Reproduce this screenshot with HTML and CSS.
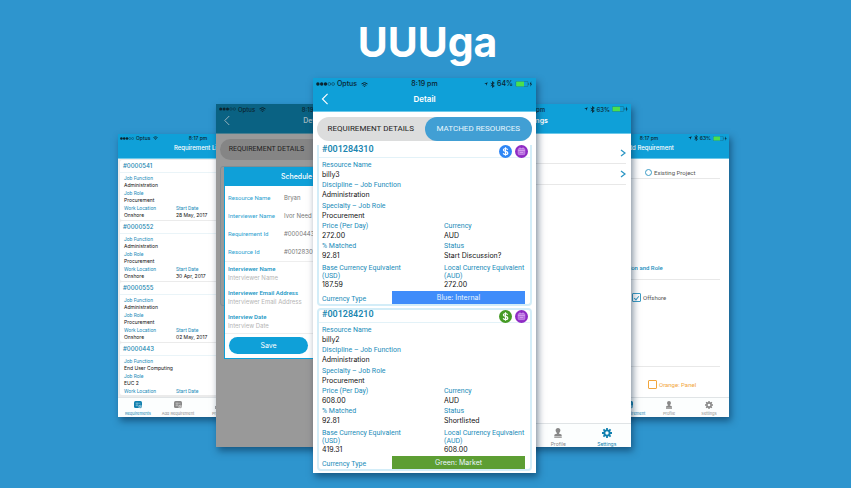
FILE: index.html
```html
<!DOCTYPE html>
<html lang="en">
<head>
<meta charset="utf-8">
<meta name="viewport" content="width=device-width, initial-scale=1">
<title>UUUga</title>
<link rel="stylesheet" href="styles.css">
</head>
<body>
<svg class="defs" aria-hidden="true">
  <symbol id="signal" viewBox="0 0 20 4"><g fill="currentColor"><circle cx="2" cy="2" r="1.8"/><circle cx="6" cy="2" r="1.8"/><circle cx="10" cy="2" r="1.8"/></g><g fill="none" stroke="currentColor" stroke-width=".5"><circle cx="14" cy="2" r="1.5"/><circle cx="18" cy="2" r="1.5"/></g></symbol>
  <symbol id="wifi" viewBox="0 0 14 10"><g fill="none" stroke="currentColor" stroke-width="2"><path d="M1 3.800Q7-1.400 13 3.800"/><path d="M3.300 6.600Q7 3.400 10.700 6.600"/></g><path d="M5 8.200Q7 6.600 9 8.200L7 10Z" fill="currentColor"/></symbol>
  <symbol id="arrow" viewBox="0 0 10 10"><path d="M9.500.5L5.500 9.500L5 5L.5 4.500Z" fill="currentColor"/></symbol>
  <symbol id="bluetooth" viewBox="0 0 8 12"><path d="M1 3.500L7 8.500L4 11V1L7 3.500L1 8.500" fill="none" stroke="currentColor" stroke-width="1.500"/></symbol>
  <symbol id="battery" viewBox="0 0 28 10"><rect x=".5" y=".5" width="20" height="9" rx="1.500" fill="none" stroke="#186b83"/><rect x="1" y="1" width="13" height="8" fill="#4be04c"/><path d="M21.500 3.500V6.500" stroke="#186b83" stroke-width="1.500"/><path d="M26 .5L23.500 5.500H25.200L24.500 9.500L27.500 4.500H25.800Z" fill="currentColor"/></symbol>
  <symbol id="back" viewBox="0 0 8 14"><path d="M7 1L1 7L7 13" fill="none" stroke="currentColor" stroke-width="1.300"/></symbol>
  <symbol id="next" viewBox="0 0 6 8"><path d="M1 1L5 4L1 7" fill="none" stroke="currentColor" stroke-width="1.300"/></symbol>
  <symbol id="list" viewBox="0 0 16 16"><rect width="16" height="14" rx="3" fill="currentColor"/><path d="M3 4.500H13M3 8.500H9M6 3V11" stroke="#fff" stroke-width=".9" opacity=".75"/><circle cx="12.500" cy="11.500" r="3" fill="currentColor" stroke="#fff"/><path d="M11 11.500H14M12.500 10V13" stroke="#fff" stroke-width=".8"/></symbol>
  <symbol id="profile" viewBox="0 0 16 20"><path d="M8 0C11 0 12.800 2 12.800 4.700C12.800 7 11.500 9 10.200 10V11.500L14 12.500Q15.500 13.200 15.500 16H.5Q.5 13.200 2 12.500L5.800 11.500V10C4.500 9 3.200 7 3.200 4.700C3.200 2 5 0 8 0ZM.5 17H15.500V19.500H.5Z" fill="currentColor"/></symbol>
  <symbol id="gear" viewBox="0 0 20 20"><circle cx="10" cy="10" r="5.300" fill="none" stroke="currentColor" stroke-width="3.800"/><path d="M10 0V4M10 16V20M0 10H4M16 10H20M2.900 2.900L5.700 5.700M14.300 14.300L17.100 17.100M2.900 17.100L5.700 14.300M14.300 5.700L17.100 2.900" stroke="currentColor" stroke-width="3.600"/></symbol>
  <symbol id="dollar" viewBox="0 0 13 13"><circle cx="6.500" cy="6.500" r="6.500" fill="currentColor"/><path d="M8.700 4.700C8.300 3.800 7.500 3.500 6.500 3.500C5.300 3.500 4.400 4 4.400 5C4.400 7 8.800 5.900 8.800 8C8.800 9 7.800 9.600 6.500 9.600C5.400 9.600 4.500 9.100 4.200 8.200M6.500 2.300V10.800" fill="none" stroke="#fff" stroke-width="1.200"/></symbol>
  <symbol id="calendar" viewBox="0 0 13 13"><circle cx="6.500" cy="6.500" r="6.500" fill="#8f2bc4"/><rect x="3.200" y="3.600" width="6.600" height="6" rx="1" fill="#b56ddd" stroke="#cb92e8" stroke-width=".8"/><path d="M3.200 5.500H9.800M5 2.400V4.300M8 2.400V4.300M4.800 7.500H8.200" stroke="#d9a5f0" stroke-width=".8"/></symbol>
</svg>

<h1 class="brand">UUUga</h1>

<main class="stage">
  <section class="phone phone-outer">
    <header class="bar">
      <div class="status"><span class="carrier"><svg class="i-signal"><use href="#signal"/></svg>Optus<svg class="i-wifi"><use href="#wifi"/></svg></span><span>8:17 pm</span></div>
      <h2 class="title">Requirement List</h2>
    </header>
    <div class="jobs">
      <article class="job">
        <h3>#0000541</h3>
        <dl><div class="wide"><dt>Job Function</dt><dd>Administration</dd></div><div class="wide"><dt>Job Role</dt><dd>Procurement</dd></div><div><dt>Work Location</dt><dd>Onshore</dd></div><div><dt>Start Date</dt><dd>28 May, 2017</dd></div></dl>
      </article>
      <article class="job">
        <h3>#0000552</h3>
        <dl><div class="wide"><dt>Job Function</dt><dd>Administration</dd></div><div class="wide"><dt>Job Role</dt><dd>Procurement</dd></div><div><dt>Work Location</dt><dd>Onshore</dd></div><div><dt>Start Date</dt><dd>30 Apr, 2017</dd></div></dl>
      </article>
      <article class="job">
        <h3>#0000555</h3>
        <dl><div class="wide"><dt>Job Function</dt><dd>Administration</dd></div><div class="wide"><dt>Job Role</dt><dd>Procurement</dd></div><div><dt>Work Location</dt><dd>Onshore</dd></div><div><dt>Start Date</dt><dd>02 May, 2017</dd></div></dl>
      </article>
      <article class="job">
        <h3>#0000443</h3>
        <dl><div class="wide"><dt>Job Function</dt><dd>End User Computing</dd></div><div class="wide"><dt>Job Role</dt><dd>EUC 2</dd></div><div><dt>Work Location</dt></div><div><dt>Start Date</dt></div></dl>
      </article>
    </div>
    <nav class="tabs">
      <a href="#requirements" class="active"><svg><use href="#list"/></svg>Requirements</a>
      <a href="#add"><svg><use href="#list"/></svg>Add Requirement</a>
      <a href="#profile"><svg><use href="#profile"/></svg>Profile</a>
    </nav>
  </section>

  <section class="phone phone-inner dimmed">
    <header class="bar">
      <div class="status"><span class="carrier"><svg class="i-signal"><use href="#signal"/></svg>Optus<svg class="i-wifi"><use href="#wifi"/></svg></span><span>8:19 pm</span></div>
      <div class="titlebar"><button class="back" aria-label="Back"><svg><use href="#back"/></svg></button><h2 class="title">Detail</h2></div>
    </header>
    <div class="switch"><button>REQUIREMENT DETAILS</button></div>
    <div class="ghost"></div>
    <form class="modal">
      <h3>Schedule Interview</h3>
      <dl class="facts">
        <dt>Resource Name</dt><dd>Bryan</dd>
        <dt>Interviewer Name</dt><dd>Ivor Need</dd>
        <dt>Requirement Id</dt><dd>#0000443</dd>
        <dt>Resource Id</dt><dd>#001283010</dd>
      </dl>
      <div class="inputs">
        <label for="iname">Interviewer Name</label><input id="iname" type="text" placeholder="Interviewer Name">
        <label for="imail">Interviewer Email Address</label><input id="imail" type="email" placeholder="Interviewer Email Address">
        <label for="idate">Interview Date</label><input id="idate" type="text" placeholder="Interview Date">
      </div>
      <div class="actions"><button type="button">Save</button></div>
    </form>
  </section>

  <section class="phone phone-main">
    <header class="bar">
      <div class="status"><span class="carrier"><svg class="i-signal"><use href="#signal"/></svg>Optus<svg class="i-wifi"><use href="#wifi"/></svg></span><span>8:19 pm</span><span class="power"><svg class="i-arrow"><use href="#arrow"/></svg><svg class="i-bt"><use href="#bluetooth"/></svg>64%<svg class="i-bat"><use href="#battery"/></svg></span></div>
      <div class="titlebar"><button class="back" aria-label="Back"><svg><use href="#back"/></svg></button><h2 class="title">Detail</h2></div>
    </header>
    <div class="switch"><button>REQUIREMENT DETAILS</button><button class="on">MATCHED RESOURCES</button></div>
    <div class="cards">
      <article class="card">
        <header><h3>#001284310</h3><svg class="blue"><use href="#dollar"/></svg><svg><use href="#calendar"/></svg></header>
        <dl>
          <div class="wide"><dt>Resource Name</dt><dd>billy3</dd></div>
          <div class="wide"><dt>Discipline – Job Function</dt><dd>Administration</dd></div>
          <div class="wide spaced"><dt>Specialty – Job Role</dt><dd>Procurement</dd></div>
          <div><dt>Price (Per Day)</dt><dd>272.00</dd></div><div><dt>Currency</dt><dd>AUD</dd></div>
          <div><dt>% Matched</dt><dd>92.81</dd></div><div><dt>Status</dt><dd>Start Discussion?</dd></div>
          <div class="tall"><dt>Base Currency Equivalent<br>(USD)</dt><dd>187.59</dd></div><div class="tall"><dt>Local Currency Equivalent<br>(AUD)</dt><dd>272.00</dd></div>
          <div class="type"><dt>Currency Type</dt><dd class="tag tag-blue">Blue: Internal</dd></div>
        </dl>
      </article>
      <article class="card">
        <header><h3>#001284210</h3><svg class="green"><use href="#dollar"/></svg><svg><use href="#calendar"/></svg></header>
        <dl>
          <div class="wide"><dt>Resource Name</dt><dd>billy2</dd></div>
          <div class="wide"><dt>Discipline – Job Function</dt><dd>Administration</dd></div>
          <div class="wide spaced"><dt>Specialty – Job Role</dt><dd>Procurement</dd></div>
          <div><dt>Price (Per Day)</dt><dd>608.00</dd></div><div><dt>Currency</dt><dd>AUD</dd></div>
          <div><dt>% Matched</dt><dd>92.81</dd></div><div><dt>Status</dt><dd>Shortlisted</dd></div>
          <div class="tall"><dt>Base Currency Equivalent<br>(USD)</dt><dd>419.31</dd></div><div class="tall"><dt>Local Currency Equivalent<br>(AUD)</dt><dd>608.00</dd></div>
          <div class="type"><dt>Currency Type</dt><dd class="tag tag-green">Green: Market</dd></div>
        </dl>
      </article>
    </div>
  </section>

  <section class="phone phone-inner right">
    <header class="bar">
      <div class="status"><span></span><span>8:17 pm</span><span class="power"><svg class="i-arrow"><use href="#arrow"/></svg><svg class="i-bt"><use href="#bluetooth"/></svg>63%<svg class="i-bat"><use href="#battery"/></svg></span></div>
      <h2 class="title">Settings</h2>
    </header>
    <div class="rows">
      <a href="#first" aria-label="Open first setting"><svg><use href="#next"/></svg></a>
      <a href="#second" aria-label="Open second setting"><svg><use href="#next"/></svg></a>
    </div>
    <nav class="tabs">
      <a href="#profile"><svg><use href="#profile"/></svg>Profile</a>
      <a href="#settings" class="active"><svg><use href="#gear"/></svg>Settings</a>
    </nav>
  </section>

  <section class="phone phone-outer right">
    <header class="bar">
      <div class="status"><span></span><span>8:17 pm</span><span class="power"><svg class="i-arrow"><use href="#arrow"/></svg><svg class="i-bt"><use href="#bluetooth"/></svg>63%<svg class="i-bat"><use href="#battery"/></svg></span></div>
      <h2 class="title">Add Requirement</h2>
    </header>
    <form class="add">
      <div class="project"><label><input type="radio" name="project">Existing Project</label></div>
      <fieldset><legend>Job Function and Role</legend></fieldset>
      <div class="shore"><label><input type="checkbox" checked>Offshore</label></div>
      <div class="panel"><label><input type="checkbox">Orange: Panel</label></div>
    </form>
    <nav class="tabs">
      <a href="#add" class="active"><svg><use href="#list"/></svg>Add Requirement</a>
      <a href="#profile"><svg><use href="#profile"/></svg>Profile</a>
      <a href="#settings"><svg><use href="#gear"/></svg>Settings</a>
    </nav>
  </section>
</main>
</body>
</html>
```
FILE: styles.css
```css
* { box-sizing: border-box; }
body { margin: 0; min-height: 100vh; background: #2e95ce; color: #111; font-family: Inter, "Liberation Sans", sans-serif; overflow: hidden; }
h1, h2, h3, dl, dd, fieldset, legend { margin: 0; padding: 0; border: 0; font-weight: 400; }
button, input { font: inherit; color: inherit; border: 0; margin: 0; padding: 0; background: none; }
a { color: inherit; text-decoration: none; }
svg { display: block; flex: none; }
.defs { position: absolute; width: 0; height: 0; }
dt, label, legend, .switch button, .card h3 { font-family: Roboto, "Liberation Sans", sans-serif; }

.brand { padding: 18px 0 12px 4px; color: #fff; font-size: 41px; line-height: 48px; font-weight: 700; text-align: center; }

.stage { display: flex; justify-content: center; align-items: center; padding-right: 4px; }
.phone { position: relative; flex: none; display: flex; flex-direction: column; aspect-ratio: 223 / 395; overflow: hidden; background: #fff; box-shadow: 2px 4px 7px rgba(0, 30, 60, .5); white-space: nowrap; }
.phone-main { z-index: 3; width: 223px; margin: 0 -99px 0 -97px; font-size: 7px; }
.phone-inner { z-index: 2; width: 194px; font-size: 6px; }
.phone-outer { width: 160px; font-size: 5px; }
.phone-outer:first-child { margin-right: -62px; }
.phone-outer:last-child { margin-left: -62px; }

.bar { flex: none; background: #0fa0d8; color: #fff; border-bottom: 1px solid #6cc9ea; }
.status { display: grid; grid-template-columns: 1fr auto 1fr; align-items: center; color: #0b2430; padding: 0 3px; line-height: 12px; font-weight: 500; }
.carrier, .power { display: flex; align-items: center; gap: 2px; }
.power { justify-content: flex-end; }
.i-signal { width: 19px; height: 4px; }
.i-wifi { width: 7px; height: 5px; margin-left: 2px; }
.i-arrow { width: 4px; height: 4px; }
.i-bt { width: 5px; height: 7px; }
.i-bat { width: 18px; height: 6px; }
.title { text-align: center; font-weight: 600; }
.titlebar { display: grid; grid-template-columns: 1fr auto 1fr; align-items: center; padding: 0 8px; }
.back { justify-self: start; }
.back svg { width: 8px; height: 12px; }
.phone-main .title { font-size: 8px; line-height: 18px; }
.phone-main .bar { padding-bottom: 3px; }
.phone-inner .title { font-size: 7px; line-height: 12px; }
.phone-inner .bar { padding-bottom: 6px; }
.phone-inner .status { line-height: 11px; }
.phone-outer .title { font-size: 6px; line-height: 10px; font-weight: 500; }
.phone-outer .bar { padding-bottom: 5px; }
.phone-outer .status { line-height: 9px; padding: 0 2px; }
.phone-outer .i-signal { width: 14px; height: 3px; }
.phone-outer .i-wifi { width: 5px; height: 4px; margin-left: 1px; }
.phone-inner .i-signal { width: 17px; }
.phone-inner .i-bat { width: 16px; }
.phone-outer .i-bat { width: 14px; height: 5px; }
.phone-outer .i-bt { width: 4px; height: 6px; }

.switch { flex: none; display: flex; margin: 5px 4px 4px; border-radius: 12px; background: #dcdddd; font-size: 8px; line-height: 24px; }
.switch button { flex: 1; color: #222; border-radius: 12px; }
.switch .on { background: #419fd4; color: #e8f6fc; }

.cards { display: flex; flex-direction: column; gap: 2px; padding: 0 4px; }
.card { border: 2px solid #d3edf8; border-radius: 4px; }
.card:first-child { border-top: 0; border-radius: 0 0 4px 4px; }
.card header { display: flex; align-items: center; gap: 3px; height: 13px; padding-right: 2px; padding-left: 3px; border-bottom: 1px solid #e3f2f8; }
.card header svg { width: 13px; height: 13px; }
.card h3 { flex: 1; font-size: 9px; line-height: 9px; padding-bottom: 3px; font-weight: 600; color: #1a86b0; }
.card .blue { color: #2e86f5; }
.card .green { color: #459a24; }
.card dl { display: grid; grid-template-columns: 122px 1fr; row-gap: 1px; padding: 3px 3px 0; }
.card dt { color: #1b8cb9; line-height: 9px; }
.card dd { line-height: 10px; }
.card .wide, .card .type { grid-column: 1 / -1; }
.card .tall { padding-top: 2px; }
.card .spaced { padding-top: 1px; }
.card .tall dt { line-height: 8px; }
.card .type { display: flex; justify-content: space-between; align-items: flex-end; padding-right: 2px; }
.card .tag { width: 133px; color: #eaf6ff; line-height: 13px; text-align: center; }
.tag-blue { background: #3f8cfa; }
.tag-green { background: #5d9e33; }

.jobs { flex: 1; min-height: 0; overflow: hidden; display: flex; flex-direction: column; gap: 1px; padding: 1px 2px 4px; background: #ebebeb; }
.job { flex: none; background: #fff; border-radius: 2px; }
.job h3 { font-size: 6px; font-weight: 500; line-height: 12px; padding-left: 3px; color: #1a86b0; border-bottom: 1px solid #eaf4f8; }
.job dl { display: grid; grid-template-columns: 52px 1fr; padding: 1px 4px; }
.job dt { color: #1b8cb9; line-height: 8px; }
.job dd { line-height: 7px; }
.job .wide { grid-column: 1 / -1; }
.job:last-child dl { padding-bottom: 0; }

.tabs { flex: none; display: flex; margin-top: auto; color: #888; border-top: 1px solid #e0e4e6; background: #fcfefe; }
.right .tabs { justify-content: flex-end; }
.tabs a { flex: 0 0 25%; display: flex; flex-direction: column; align-items: center; }
.tabs .active { color: #0f7fae; }
.phone-outer .tabs a { gap: 2px; padding: 3px 0 1px; font-size: 4px; line-height: 5px; }
.phone-outer .tabs svg { width: 8px; height: 8px; }
.phone-inner .tabs a { gap: 3px; padding: 4px 0 0; font-size: 5px; line-height: 6px; }
.phone-inner .tabs svg { width: 10px; height: 10px; }

.dimmed { background: #999; }
.dimmed .bar { background: #0a6283; color: #9db5bf; border-color: #487e90; }
.dimmed .back svg { width: 6px; height: 11px; }
.dimmed .switch { background: #858585; font-size: 7px; line-height: 21px; }
.dimmed .switch button { flex: 0 0 50%; }
.ghost { height: 140px; margin: 2px 4px; border: 1px solid #7f8e95; border-radius: 3px; }
.modal { position: absolute; top: 63px; left: 8px; right: 8px; background: #fff; border: 1px solid #0fa0d8; font-size: 6px; }
.modal h3 { background: #0fa0d8; color: #fff; font-size: 7px; line-height: 18px; text-align: center; font-weight: 500; }
.facts { display: grid; grid-template-columns: 56px 1fr; padding: 3px 3px 0; line-height: 18px; border-bottom: 1px solid #eee; }
.facts dt { color: #2b9fd0; }
.facts dd { color: #777; }
.inputs { display: flex; flex-direction: column; padding: 2px 3px 0; border-bottom: 1px solid #eee; }
.inputs label { color: #1595c4; font-weight: 500; line-height: 9px; }
.inputs input { height: 10px; margin-bottom: 5px; width: 100%; }
.inputs input:last-child { margin-bottom: 2px; }
.inputs input::placeholder { color: #b5b5b5; opacity: 1; }
.actions { padding: 3px 4px 4px; }
.actions button { width: 79px; line-height: 17px; border-radius: 9px; background: #0fa0d8; color: #fff; font-size: 7px; }

.rows { display: flex; flex-direction: column; padding: 9px 5px 0; color: #2a95c4; }
.rows a { display: flex; justify-content: flex-end; align-items: center; height: 21px; border-bottom: 1px solid #e8e8e8; }
.rows svg { width: 6px; height: 8px; }

.add { display: flex; flex-direction: column; padding: 8px 9px 0; color: #555; font-size: 6px; }
.add label { display: flex; align-items: center; gap: 2px; }
.add input { appearance: none; flex: none; width: 9px; height: 9px; border: 1px solid #3b9cc6; border-radius: 1px; }
.add input[type="radio"] { width: 7px; height: 7px; border-radius: 50%; }
.add input:checked { display: grid; place-items: center; }
.add input:checked::before { content: ""; width: 2px; height: 4px; border: solid #3b9cc6; border-width: 0 1px 1px 0; rotate: 40deg; }
.project { height: 12px; padding: 2px 0 0 67px; border-bottom: 1px solid #e8e8e8; }
.add fieldset { height: 101px; padding: 85px 0 0 25px; border-bottom: 1px solid #e8e8e8; }
.add legend { float: left; color: #1b8fbd; font-weight: 500; }
.shore { height: 87px; padding: 13px 0 0 54px; border-bottom: 1px solid #e8e8e8; }
.panel { padding: 13px 0 0 70px; color: #f2a63c; }
.panel input { border-color: #f2a63c; }
```
